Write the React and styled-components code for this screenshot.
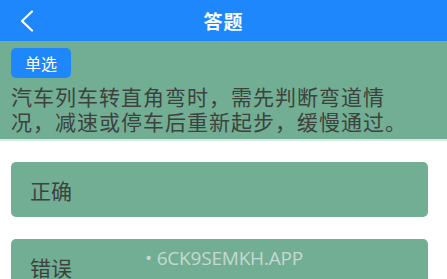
import React from "react";
import styled, { createGlobalStyle } from "styled-components";

const GlobalStyle = createGlobalStyle`
  body {
    margin: 0;
    background: #fff;
    font-family: "Noto Sans CJK SC", "Noto Sans", sans-serif;
  }
`;

const Page = styled.div`
  width: 447px;
  height: 279px;
  overflow: hidden;
  position: relative;
`;

const Header = styled.div`
  height: 41px;
  background: #1e87fc;
  display: grid;
  grid-template-columns: 54px 1fr 54px;
  align-items: center;
  color: #fff;
`;

const BackButton = styled.div`
  display: flex;
  align-items: center;
  padding-left: 19px;
  height: 100%;
`;

const Title = styled.h1`
  margin: 0;
  text-align: center;
  font-size: 19px;
  font-weight: bold;
  letter-spacing: 1px;
`;

const QuestionPanel = styled.div`
  background: #72ae93;
  padding: 7px 22px 5px 11px;
  border-bottom: 2px solid #d5ebe2;
`;

const Tag = styled.span`
  display: inline-flex;
  align-items: center;
  justify-content: center;
  width: 60px;
  height: 30px;
  border-radius: 5px;
  background: #1e87fc;
  color: #fff;
  font-size: 16px;
`;

const QuestionText = styled.p`
  margin: 6px 0 0;
  font-size: 21px;
  line-height: 25px;
  letter-spacing: 1px;
  color: #3d423f;
`;

const Options = styled.div`
  display: flex;
  flex-direction: column;
  gap: 22px;
  padding: 21px 19px 0 11px;
`;

const Option = styled.div`
  position: relative;
  height: 55px;
  border-radius: 5px;
  background: #72ae93;
  display: flex;
  align-items: center;
  padding-left: 19px;
  font-size: 21px;
  color: #3d423f;
`;

const Watermark = styled.span`
  position: absolute;
  left: 134px;
  top: 6px;
  font-family: "Open Sans", "Noto Sans", sans-serif;
  font-size: 19px;
  color: rgba(225, 232, 230, 0.75);
  letter-spacing: -0.2px;
`;

function ChevronLeft() {
  return (
    <svg width="16" height="22" viewBox="0 0 16 22" fill="none">
      <path d="M13 1.5 L3 11 L13 20.5" stroke="#fff" strokeWidth="2.2" strokeLinecap="round" strokeLinejoin="round" />
    </svg>
  );
}

export default function App() {
  return (
    <Page>
      <GlobalStyle />
      <Header>
        <BackButton>
          <ChevronLeft />
        </BackButton>
        <Title>答题</Title>
        <span />
      </Header>
      <QuestionPanel>
        <Tag>单选</Tag>
        <QuestionText>
          汽车列车转直角弯时，需先判断弯道情况，减速或停车后重新起步，缓慢通过。
        </QuestionText>
      </QuestionPanel>
      <Options>
        <Option>正确</Option>
        <Option>
          错误
          <Watermark>• 6CK9SEMKH.APP</Watermark>
        </Option>
      </Options>
    </Page>
  );
}
